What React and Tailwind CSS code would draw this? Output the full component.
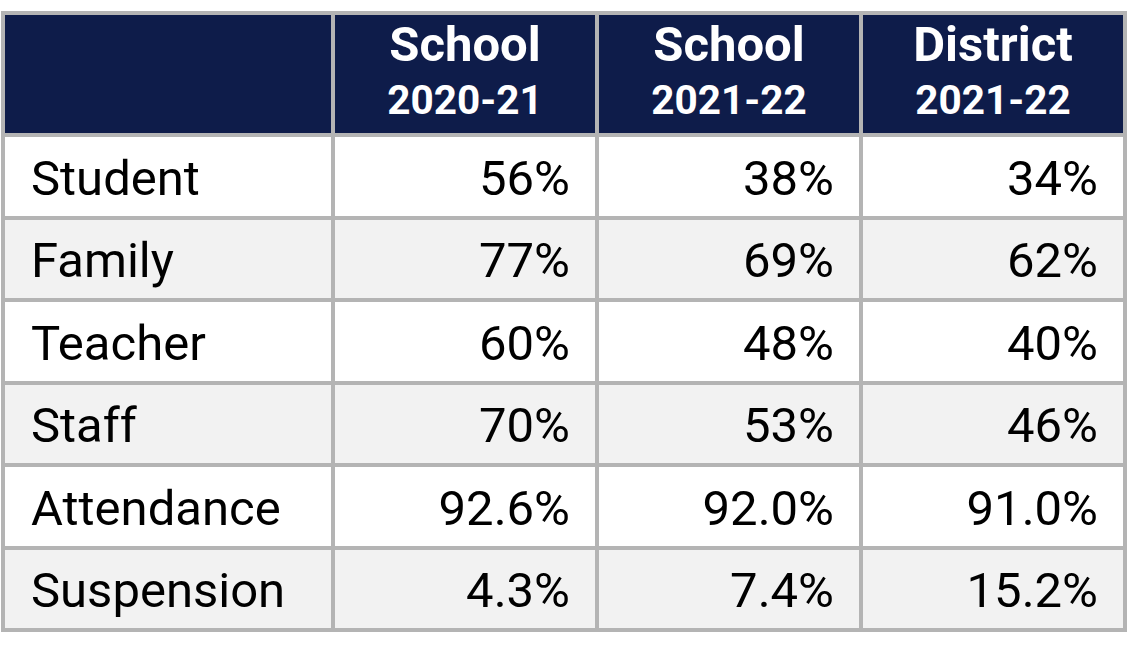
const rows = [
  ["Student", "56%", "38%", "34%"],
  ["Family", "77%", "69%", "62%"],
  ["Teacher", "60%", "48%", "40%"],
  ["Staff", "70%", "53%", "46%"],
  ["Attendance", "92.6%", "92.0%", "91.0%"],
  ["Suspension", "4.3%", "7.4%", "15.2%"],
];

const headers = [
  ["School", "2020-21"],
  ["School", "2021-22"],
  ["District", "2021-22"],
];

const App = () => {
  return (
    <div className="bg-white w-[1130px] h-[651px] pt-[11px] pl-[1px] font-['Roboto',sans-serif]">
      <div className="grid grid-cols-[326px_260px_260px_260px] grid-rows-[118px_repeat(6,78.5px)] gap-[4px] p-[4px] bg-[#b4b4b4] w-[1126px]">
        <div className="bg-[#0e1c4a]" />
        {headers.map((h, i) => (
          <div
            key={i}
            className="bg-[#0e1c4a] text-white font-bold flex flex-col items-center justify-start pt-[4px]"
          >
            <span className="text-[49px] leading-[52px]">{h[0]}</span>
            <span className="text-[40.5px] leading-[59px]">{h[1]}</span>
          </div>
        ))}
        {rows.map((r, i) =>
          r.map((cell, j) => (
            <div
              key={i + "-" + j}
              className={`${i % 2 === 1 ? "bg-[#f2f2f2]" : "bg-white"} flex items-center pt-[4px] text-black text-[49px] ${
                j === 0 ? "justify-start pl-[26px]" : "justify-end pr-[25px]"
              }`}
            >
              {cell}
            </div>
          ))
        )}
      </div>
    </div>
  );
};

export default App;
